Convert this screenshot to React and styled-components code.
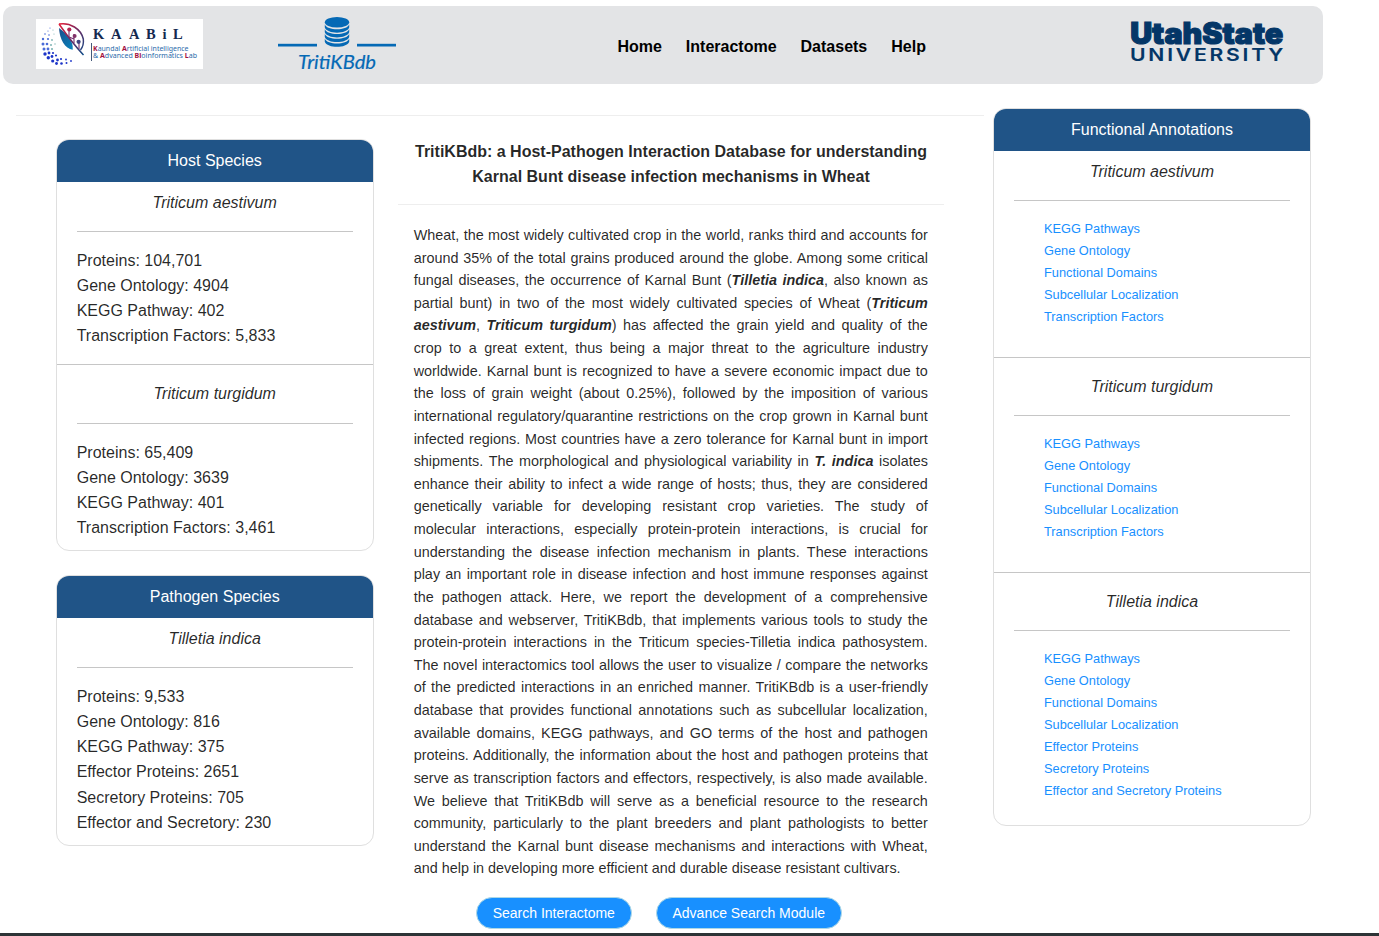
import React from 'react';
import styled, { createGlobalStyle } from 'styled-components';

const Global = createGlobalStyle`
  * { box-sizing: border-box; }
  html, body { margin: 0; padding: 0; }
  body {
    height: 936px;
    overflow: hidden;
    background: #fff;
    color: rgba(0, 0, 0, 0.85);
    font: 16px/1.5715 "Liberation Sans", Arial, sans-serif;
  }
`;

const Page = styled.div`
  height: 936px;
  display: flex;
  flex-direction: column;
  overflow: hidden;
`;

const Navbar = styled.header`
  flex: none;
  display: flex;
  align-items: flex-start;
  width: 1320px;
  height: 78px;
  margin: 6px 0 0 3px;
  border-radius: 10px;
  background: #e3e4e6;
`;

const Logo = styled.svg`
  flex: none;
  display: block;
  margin: ${(p) => p.$m};
`;

const Nav = styled.nav`
  display: flex;
  gap: 24px;
  margin: 28px 0 0 221.4px;
  width: 511.6px;
`;

const NavLink = styled.a`
  color: #000;
  font-weight: bold;
  white-space: nowrap;
`;

const Columns = styled.main`
  flex: 1;
  min-height: 0;
  display: flex;
  align-items: flex-start;
  padding-left: 16px;
`;

const Primary = styled.div`
  width: 968px;
  margin-top: 31px;
`;

const Rule = styled.hr`
  height: 0;
  margin: ${(p) => p.$m || '16px 0'};
  border: 0;
  border-top: 1px solid ${(p) => (p.$strong ? '#c6c6c6' : '#eeeeee')};
`;

const PrimaryRow = styled.div`
  display: flex;
  align-items: flex-start;
  padding: 22.57px 39px 0 39.7px;
`;

const CardStack = styled.div`
  display: flex;
  flex-direction: column;
  gap: 23.6px;
  width: 318px;
`;

const Card = styled.section`
  width: 318px;
  padding-bottom: 10px;
  border: 1px solid #dfdfdf;
  border-radius: 13px;
  overflow: hidden;
  background: #fff;
`;

const CardHeader = styled.div`
  padding: 8px 0;
  border-bottom: 1px solid #205487;
  background: #205487;
  color: #fff;
  text-align: center;
`;

const Species = styled.div`
  padding-top: ${(p) => (p.$first ? '8px' : '0')};
  font-style: italic;
  text-align: center;
`;

const Stats = styled.div`
  padding: 0 20px;
`;

const LinkList = styled.ul`
  margin: 0;
  padding: 0 0 14px 50px;
  list-style: none;
  font-size: 14px;
  line-height: 22px;
`;

const LinkItem = styled.li`
  height: 22px;
`;

const ListLink = styled.a`
  color: #1890ff;
  font-size: 12.8px;
`;

const Aside = styled.aside`
  margin: 23.8px 0 0 9px;
`;

const Center = styled.div`
  flex: none;
  width: 545.5px;
  margin-left: 24.6px;
`;

const Title = styled.div`
  font-weight: bold;
  text-align: center;
`;

const Abstract = styled.p`
  width: 514.2px;
  margin: 18.6px 0 0 15.4px;
  font-size: 14.4px;
  text-align: justify;
`;

const Actions = styled.div`
  display: flex;
  gap: 24px;
  margin: 17.4px 0 0 77.5px;
`;

const Button = styled.button`
  height: 32px;
  width: ${(p) => p.$w}px;
  padding: 0;
  border: 1px solid #add8e6;
  border-radius: 16px;
  background: #1890ff;
  color: #fff;
  font: 14px "Liberation Sans", Arial, sans-serif;
  white-space: nowrap;
`;

const Footer = styled.footer`
  flex: none;
  height: 3px;
  background: #2d3436;
`;

const DOTS = [
  [14, 9, .6], [12, 12, .6], [17, 11, .6], [9, 15, .8], [13, 16, .8], [18, 15, .6],
  [7, 20, 1.2], [12, 20, 1.1], [16, 21, .9], [7, 25, 1.5], [11, 25, 1.3], [15, 26, 1], [19, 25, .7],
  [8, 30, 1.5], [12, 30, 1.4], [16, 30, 1.1], [9, 35, 1.7], [13, 34, 1.4], [17, 34, 1.1],
  [12.3, 38.7, 1.7], [16, 37.5, 1.4], [20, 36.5, 1.1], [16.7, 42, 1.6], [21.5, 41, 1.4], [25, 40, 1.1],
  [20.5, 44.5, 1.4], [25.5, 44.5, 1.3], [30.5, 44, 1], [30, 40.5, .9], [35, 42, .9],
];

function KaabilLogo() {
  return (
    <Logo $m="13px 0 0 33px" width="167" height="50" viewBox="0 0 167 50">
      <defs>
        <linearGradient id="leaf" x1="0" y1="0" x2="1" y2="1">
          <stop offset="0" stopColor="#e51b35" />
          <stop offset=".5" stopColor="#6b2a63" />
          <stop offset="1" stopColor="#0b4b87" />
        </linearGradient>
        <linearGradient id="blade" x1="0" y1="0" x2="1" y2="1">
          <stop offset="0" stopColor="#1b4f8c" />
          <stop offset="1" stopColor="#0784bd" />
        </linearGradient>
      </defs>
      <rect width="167" height="50" fill="#fff" />
      {DOTS.map(([x, y, r]) => (
        <circle key={`${x}-${y}`} cx={x} cy={y} r={r} fill={y > 32 ? '#1c34c8' : x > 14 ? '#7fb5b5' : '#4a6bd8'} />
      ))}
      <path d="M23 9C23.5 20 29 30 36.7 30.7C37.5 22 32 16 23 9Z" fill="url(#blade)" />
      <path d="M23 5C34 3 45 10 47.3 20C48 26 46.5 28 44.5 31M23 5C30 15 39 27 47.5 36" fill="none" stroke="url(#leaf)" strokeWidth="1.5" />
      <path d="M33 18V11M38 24V15M43 30V23M38 20L33 18" fill="none" stroke="#76306d" strokeWidth="1.1" />
      <circle cx="33.3" cy="10.5" r="2.1" fill="#b32550" />
      <circle cx="38.6" cy="17" r="2" fill="#813268" />
      <circle cx="42.6" cy="22.8" r="2.1" fill="#40437f" />
      <text x="57 70 75 88 93 106 110 123 126.5 133 137" y="19.5" fontFamily="Liberation Serif, serif" fontWeight="bold" fontSize="14.5" fill="#14294f">K A A B i L</text>
      <path d="M55.5 24V42" stroke="#45597a" strokeWidth="1" />
      <g fontFamily="Noto Sans, sans-serif" fontSize="7.2" fill="#2c6cab">
        <text x="57" y="32.2" textLength="95.5" lengthAdjust="spacingAndGlyphs">
          <tspan fill="#a3113f" fontWeight="bold">K</tspan>aundal <tspan fill="#a3113f" fontWeight="bold">A</tspan>rtificial intelligence
        </text>
        <text x="57" y="39.4" textLength="104" lengthAdjust="spacingAndGlyphs">
          &amp; <tspan fill="#a3113f" fontWeight="bold">A</tspan>dvanced <tspan fill="#a3113f" fontWeight="bold">Bi</tspan>oinformatics <tspan fill="#a3113f" fontWeight="bold">L</tspan>ab
        </text>
      </g>
    </Logo>
  );
}

function TritiLogo() {
  return (
    <Logo $m="9px 0 0 75px" width="118" height="62" viewBox="0 0 118 62">
      <g fill="#0569b5">
        <rect x="0" y="28.8" width="39" height="2.7" />
        <rect x="79" y="28.8" width="39" height="2.7" />
        <ellipse cx="59" cy="7.3" rx="12.2" ry="5.3" />
        {[0, 4.7, 9.4, 14.1].map((d) => (
          <path key={d} d={`M46.8 ${9.6 + d}C49 ${15.9 + d} 69 ${15.9 + d} 71.2 ${9.6 + d}V${12.6 + d}C69 ${19.4 + d} 49 ${19.4 + d} 46.8 ${12.6 + d}Z`} />
        ))}
        <text x="20" y="54" fontFamily="Lato, sans-serif" fontStyle="italic" fontSize="20" stroke="#0569b5" strokeWidth=".2" textLength="78" lengthAdjust="spacingAndGlyphs">TritiKBdb</text>
      </g>
    </Logo>
  );
}

function UsuLogo() {
  return (
    <Logo $m="4px 0 0 0" width="158" height="60" viewBox="0 -8 158 60">
      <g fill="#043667" stroke="#043667" fontFamily="Inter, sans-serif">
        <text x="1.2" y="26" fontWeight="900" fontSize="29.5" strokeWidth="1.2" textLength="153" lengthAdjust="spacingAndGlyphs">UtahState</text>
        <text x="1" y="42.7" fontWeight="600" fontSize="16.8" strokeWidth=".1" letterSpacing="2.2" textLength="156" lengthAdjust="spacingAndGlyphs">UNIVERSITY</text>
      </g>
    </Logo>
  );
}

const HOSTS = [
  { name: 'Triticum aestivum', stats: ['Proteins: 104,701', 'Gene Ontology: 4904', 'KEGG Pathway: 402', 'Transcription Factors: 5,833'] },
  { name: 'Triticum turgidum', stats: ['Proteins: 65,409', 'Gene Ontology: 3639', 'KEGG Pathway: 401', 'Transcription Factors: 3,461'] },
];
const PATHOGENS = [
  { name: 'Tilletia indica', stats: ['Proteins: 9,533', 'Gene Ontology: 816', 'KEGG Pathway: 375', 'Effector Proteins: 2651', 'Secretory Proteins: 705', 'Effector and Secretory: 230'] },
];
const COMMON = ['KEGG Pathways', 'Gene Ontology', 'Functional Domains', 'Subcellular Localization'];
const ANNOTATIONS = [
  { name: 'Triticum aestivum', links: [...COMMON, 'Transcription Factors'] },
  { name: 'Triticum turgidum', links: [...COMMON, 'Transcription Factors'] },
  { name: 'Tilletia indica', links: [...COMMON, 'Effector Proteins', 'Secretory Proteins', 'Effector and Secretory Proteins'] },
];

function SpeciesCard({ title, items }) {
  return (
    <Card>
      <CardHeader>{title}</CardHeader>
      {items.map((item, i) => (
        <React.Fragment key={item.name}>
          {i > 0 && <Rule $strong />}
          <Species $first={i === 0}>{item.name}</Species>
          <Rule $strong $m="16px 20px" />
          {item.stats && <Stats>{item.stats.map((s) => <div key={s}>{s}</div>)}</Stats>}
          {item.links && <LinkList>{item.links.map((l) => <LinkItem key={l}><ListLink>{l}</ListLink></LinkItem>)}</LinkList>}
        </React.Fragment>
      ))}
    </Card>
  );
}

const Em = styled.em`
  font-weight: bold;
`;

export default function App() {
  return (
    <Page>
      <Global />
      <Navbar>
        <KaabilLogo />
        <TritiLogo />
        <Nav>
          {['Home', 'Interactome', 'Datasets', 'Help'].map((n) => <NavLink key={n}>{n}</NavLink>)}
        </Nav>
        <UsuLogo />
      </Navbar>
      <Columns>
        <Primary>
          <Rule $m="0" />
          <PrimaryRow>
            <CardStack>
              <SpeciesCard title="Host Species" items={HOSTS} />
              <SpeciesCard title="Pathogen Species" items={PATHOGENS} />
            </CardStack>
            <Center>
              <Title>TritiKBdb: a Host-Pathogen Interaction Database for understanding<br />Karnal Bunt disease infection mechanisms in Wheat</Title>
              <Rule $m="15.5px 0 0" />
              <Abstract>
                Wheat, the most widely cultivated crop in the world, ranks third and accounts for around 35% of the total grains produced around the globe. Among some critical fungal diseases, the occurrence of Karnal Bunt (<Em>Tilletia indica</Em>, also known as partial bunt) in two of the most widely cultivated species of Wheat (<Em>Triticum aestivum</Em>, <Em>Triticum turgidum</Em>) has affected the grain yield and quality of the crop to a great extent, thus being a major threat to the agriculture industry worldwide. Karnal bunt is recognized to have a severe economic impact due to the loss of grain weight (about 0.25%), followed by the imposition of various international regulatory/quarantine restrictions on the crop grown in Karnal bunt infected regions. Most countries have a zero tolerance for Karnal bunt in import shipments. The morphological and physiological variability in <Em>T. indica</Em> isolates enhance their ability to infect a wide range of hosts; thus, they are considered genetically variable for developing resistant crop varieties. The study of molecular interactions, especially protein-protein interactions, is crucial for understanding the disease infection mechanism in plants. These interactions play an important role in disease infection and host immune responses against the pathogen attack. Here, we report the development of a comprehensive database and webserver, TritiKBdb, that implements various tools to study the protein-protein interactions in the Triticum species-Tilletia indica pathosystem. The novel interactomics tool allows the user to visualize / compare the networks of the predicted interactions in an enriched manner. TritiKBdb is a user-friendly database that provides functional annotations such as subcellular localization, available domains, KEGG pathways, and GO terms of the host and pathogen proteins. Additionally, the information about the host and pathogen proteins that serve as transcription factors and effectors, respectively, is also made available. We believe that TritiKBdb will serve as a beneficial resource to the research community, particularly to the plant breeders and plant pathologists to better understand the Karnal bunt disease mechanisms and interactions with Wheat, and help in developing more efficient and durable disease resistant cultivars.
              </Abstract>
              <Actions>
                <Button $w={156}>Search Interactome</Button>
                <Button $w={186}>Advance Search Module</Button>
              </Actions>
            </Center>
          </PrimaryRow>
        </Primary>
        <Aside>
          <SpeciesCard title="Functional Annotations" items={ANNOTATIONS} />
        </Aside>
      </Columns>
      <Footer />
    </Page>
  );
}
